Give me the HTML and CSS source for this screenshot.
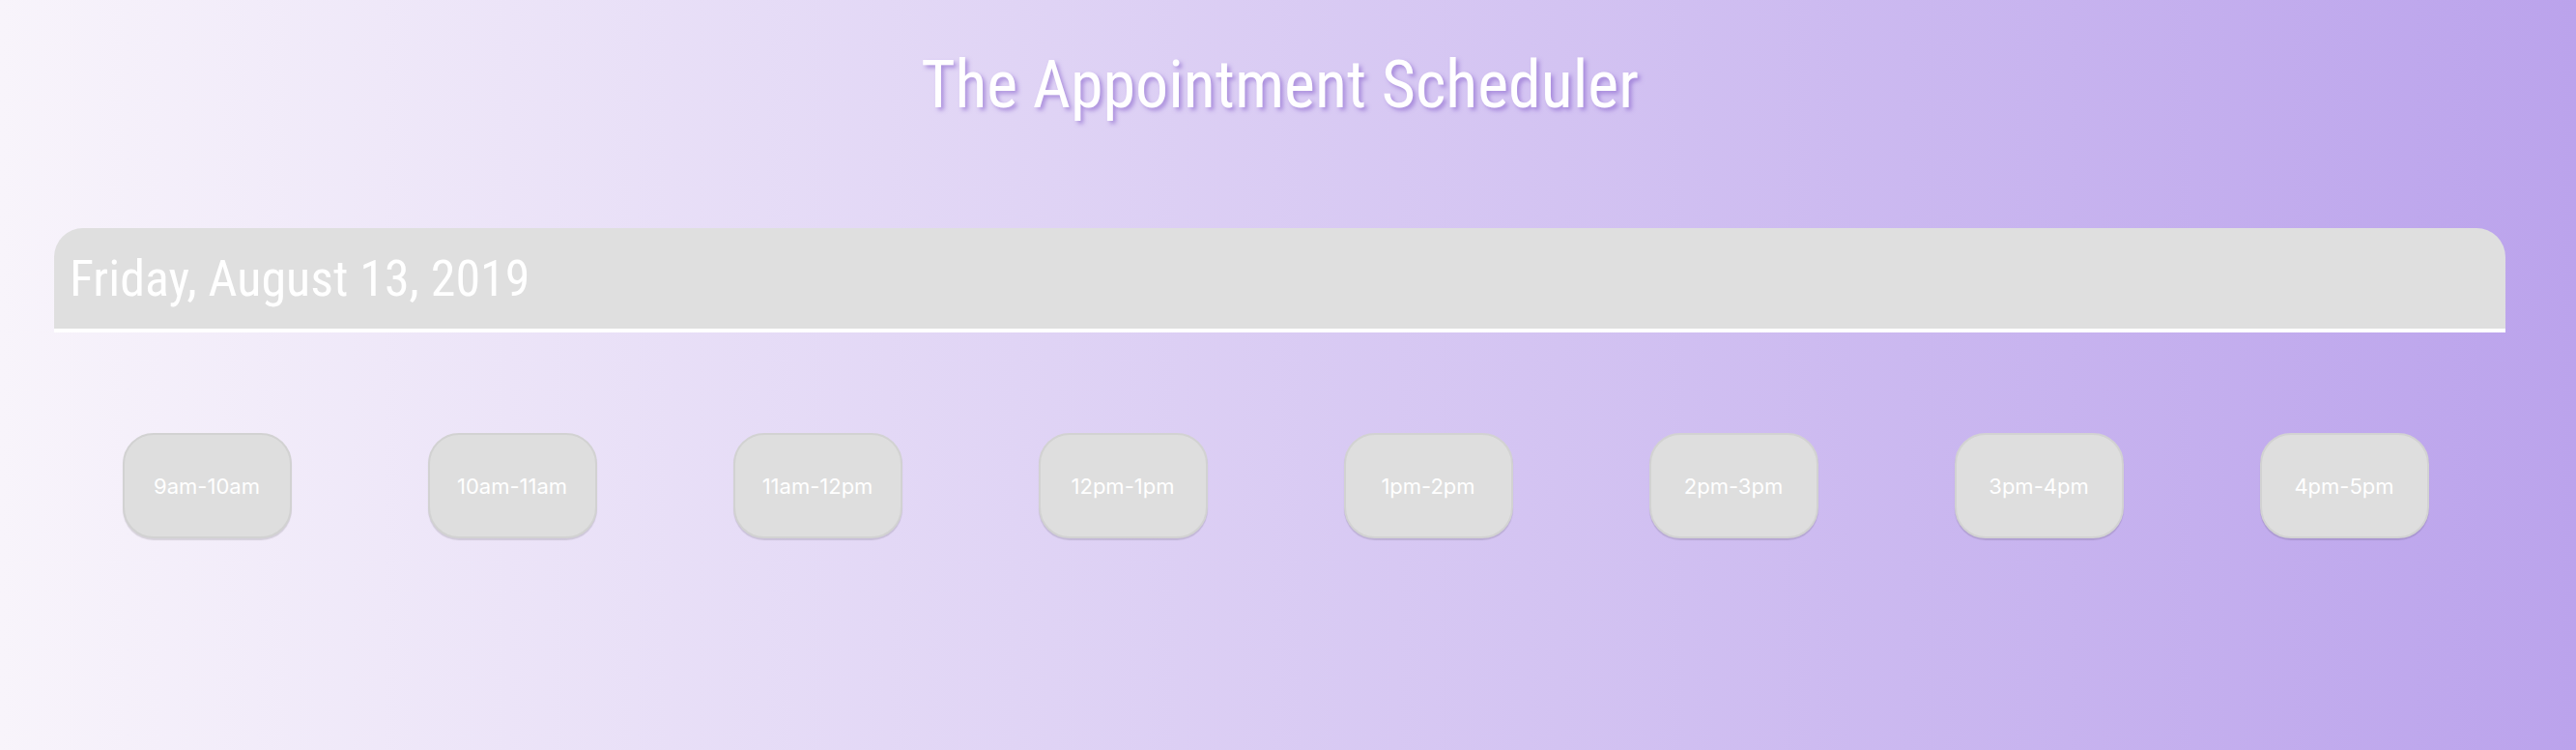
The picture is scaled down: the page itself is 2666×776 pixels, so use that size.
FILE: index.html
```html
<!DOCTYPE html>
<html lang="en">
<head>
<meta charset="utf-8">
<title>The Appointment Scheduler</title>
<link rel="stylesheet" href="styles.css">
</head>
<body>
<div class="page">
  <header class="masthead">
    <h1 class="title">The Appointment Scheduler</h1>
  </header>
  <main class="scheduler">
    <div class="day-bar">
      <h2 class="day">Friday, August 13, 2019</h2>
    </div>
    <div class="slots">
      <div class="slot"><button class="slot-btn">9am-10am</button></div>
      <div class="slot"><button class="slot-btn">10am-11am</button></div>
      <div class="slot"><button class="slot-btn">11am-12pm</button></div>
      <div class="slot"><button class="slot-btn">12pm-1pm</button></div>
      <div class="slot"><button class="slot-btn">1pm-2pm</button></div>
      <div class="slot"><button class="slot-btn">2pm-3pm</button></div>
      <div class="slot"><button class="slot-btn">3pm-4pm</button></div>
      <div class="slot"><button class="slot-btn">4pm-5pm</button></div>
    </div>
  </main>
</div>
</body>
</html>
```

FILE: styles.css
```css
html, body {
  margin: 0;
  padding: 0;
  height: 100%;
}
body {
  background: linear-gradient(to right, #f8f4fb 0%, #bba3ec 100%);
  font-family: "Roboto Condensed", "DejaVu Sans Condensed", "Liberation Sans", sans-serif;
  color: #ffffff;
}
.page {
  margin-left: 56px;
  width: 2537px;
}
.masthead {
  height: 236px;
  display: flex;
  justify-content: center;
}
.title {
  margin: 0;
  padding-top: 40px;
  font-size: 68px;
  line-height: 96px;
  font-weight: 400;
  color: #ffffff;
  text-shadow: 3px 3px 4px rgba(130, 90, 200, 0.55);
}
.day-bar {
  background: #dfdfdf;
  border-top-left-radius: 30px;
  border-top-right-radius: 30px;
  border-bottom: 4px solid #ffffff;
  height: 104px;
  box-sizing: content-box;
  display: flex;
  align-items: flex-start;
  padding-left: 16px;
}
.day {
  margin: 0;
  padding-top: 23px;
  font-size: 52px;
  font-weight: 400;
  line-height: 60px;
  color: #ffffff;
}
.slots {
  display: grid;
  grid-template-columns: repeat(8, 316px);
  margin-top: 104px;
}
.slot {
  display: flex;
  justify-content: center;
}
.slot-btn {
  width: 175px;
  height: 109px;
  box-sizing: border-box;
  background: #dedede;
  border: 2px solid #d2d2d2;
  border-radius: 32px;
  box-shadow: 0 2px 1px rgba(0, 0, 0, 0.12);
  color: #ffffff;
  font-family: Inter, "Liberation Sans", sans-serif;
  font-size: 22px;
  padding: 0;
}
```
